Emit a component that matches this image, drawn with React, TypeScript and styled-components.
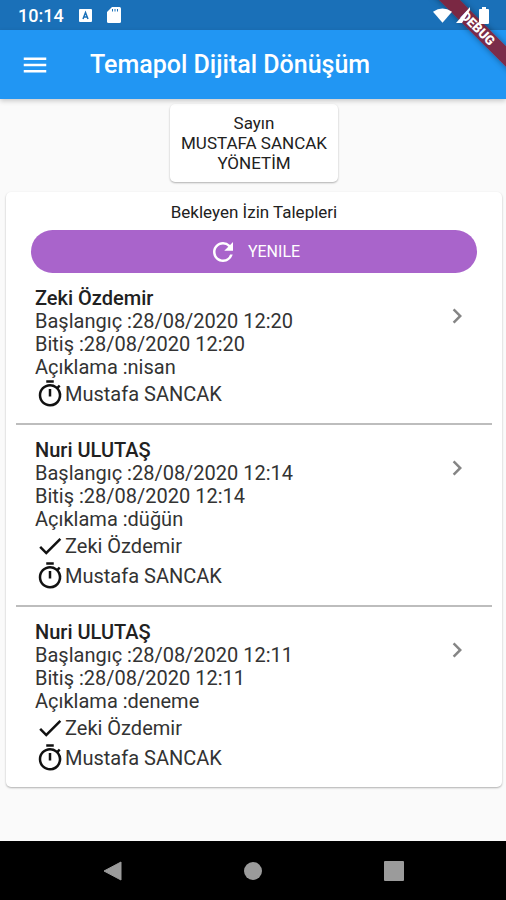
import React from "react";
import styled, { createGlobalStyle } from "styled-components";
import { MdCheck, MdChevronRight, MdMenu, MdOutlineTimer, MdRefresh } from "react-icons/md";

const GlobalStyle = createGlobalStyle`
  * { box-sizing: border-box; }
  body { margin: 0; background: #fafafa; }
  button { font: inherit; border: 0; padding: 0; background: none; cursor: pointer; }
`;

const Screen = styled.div`
  position: relative;
  display: flex;
  flex-direction: column;
  min-height: 100vh;
  overflow: hidden;
  font-family: Roboto, sans-serif;
  color: #212121;
`;

const StatusBar = styled.div`
  display: flex;
  align-items: center;
  justify-content: space-between;
  height: 30px;
  padding: 0 17px 0 18px;
  background: #1a70b8;
  color: #ffffff;
  font-size: 18px;
  font-weight: 500;
`;

const StatusGroup = styled.div<{ $gap: number }>`
  z-index: 3;
  position: relative;
  display: flex;
  align-items: center;
  gap: ${({ $gap }) => $gap}px;
`;

const AppBar = styled.header`
  z-index: 1;
  display: flex;
  align-items: center;
  gap: 40px;
  height: 69px;
  padding: 0 20px;
  background: #2196f3;
  color: #ffffff;
  box-shadow: 0 2px 5px rgba(0, 0, 0, 0.2);
`;

const MenuButton = styled.button`
  display: flex;
  color: inherit;
`;

const Title = styled.h1`
  margin: 0;
  font-size: 25px;
  font-weight: 500;
  line-height: 32px;
`;

const Content = styled.main`
  flex: 1;
  display: flex;
  flex-direction: column;
  align-items: center;
  gap: 10px;
  padding: 5px 4px 40px 6px;
`;

const Card = styled.section`
  background: #ffffff;
  border-radius: 5px;
  box-shadow: 0 1px 2px rgba(0, 0, 0, 0.3);
`;

const UserCard = styled(Card)`
  padding: 9px 11px;
  text-align: center;
  font-size: 17px;
  line-height: 20px;
`;

const RequestsCard = styled(Card)`
  align-self: stretch;
  padding: 10px 10px 0;
`;

const CardTitle = styled.h2`
  margin: 0 0 8px;
  text-align: center;
  font-size: 17px;
  font-weight: 400;
  line-height: 20px;
`;

const ActionRow = styled.div`
  display: flex;
  padding: 0 15px;
`;

const RefreshButton = styled.button`
  flex: 1;
  display: flex;
  align-items: center;
  justify-content: center;
  gap: 10px;
  height: 43px;
  border-radius: 22px;
  background: #a964cb;
  color: #ffffff;
  font-size: 16px;
`;

const RequestList = styled.ul`
  margin: 0;
  padding: 0;
  list-style: none;
`;

const Request = styled.li`
  display: flex;
  align-items: flex-start;
  justify-content: space-between;
  padding: 13px 20px 14px 19px;

  & + & {
    border-top: 2px solid #bdbdbd;
  }
`;

const Name = styled.h3`
  margin: 0;
  font-size: 20px;
  font-weight: 500;
  line-height: 24px;
`;

const Detail = styled.p`
  margin: 0;
  font-size: 20px;
  line-height: 23px;
  color: #333333;
`;

const Approval = styled.div`
  display: flex;
  align-items: center;
  height: 30px;
  font-size: 20px;
  color: #333333;

  svg { color: #111111; }
`;

const OpenButton = styled.button`
  display: flex;
  margin-top: 15px;
  color: #858585;
`;

const NavBar = styled.nav`
  display: grid;
  grid-template-columns: repeat(3, 1fr);
  height: 59px;
  padding: 0 42px;
  background: #000000;
`;

const NavButton = styled.button`
  display: flex;
  align-items: center;
  justify-content: center;
`;

const DebugBanner = styled.div`
  position: absolute;
  z-index: 2;
  top: 21px;
  right: -44px;
  width: 144px;
  height: 15px;
  transform: rotate(45deg);
  background: rgba(135, 30, 50, 0.88);
  box-shadow: 0 0 6px rgba(0, 0, 0, 0.4);
  color: #ffffff;
  text-align: center;
  font-size: 13px;
  font-weight: 900;
  line-height: 15px;
`;

type Step = { name: string; done: boolean };
type LeaveRequest = { name: string; start: string; end: string; note: string; steps: Step[] };

const requests: LeaveRequest[] = [
  {
    name: "Zeki Özdemir",
    start: "28/08/2020 12:20",
    end: "28/08/2020 12:20",
    note: "nisan",
    steps: [{ name: "Mustafa SANCAK", done: false }],
  },
  {
    name: "Nuri ULUTAŞ",
    start: "28/08/2020 12:14",
    end: "28/08/2020 12:14",
    note: "düğün",
    steps: [
      { name: "Zeki Özdemir", done: true },
      { name: "Mustafa SANCAK", done: false },
    ],
  },
  {
    name: "Nuri ULUTAŞ",
    start: "28/08/2020 12:11",
    end: "28/08/2020 12:11",
    note: "deneme",
    steps: [
      { name: "Zeki Özdemir", done: true },
      { name: "Mustafa SANCAK", done: false },
    ],
  },
];

export default function App() {
  return (
    <>
      <GlobalStyle />
      <Screen lang="tr">
        <StatusBar>
          <StatusGroup $gap={15}>
            <span>10:14</span>
            <svg width="13" height="13" viewBox="0 0 13 13">
              <rect width="13" height="13" rx="1" fill="#fff" />
              <path d="M4 10 6.5 3.5 9 10M5 8h3" fill="none" stroke="#1a70b8" strokeWidth="1.5" />
            </svg>
            <svg width="14" height="16" viewBox="0 0 14 16">
              <path d="M5 0h7.5Q14 0 14 1.5V14.5Q14 16 12.5 16h-11Q0 16 0 14.5V5z" fill="#fff" />
              <path d="M5.5 2v2.5M8 2v2.5M10.5 2v2.5" stroke="#1a70b8" strokeWidth="1" />
            </svg>
          </StatusGroup>
          <StatusGroup $gap={4}>
            <svg width="19" height="15" viewBox="0 0 20 15">
              <path d="M10 15 0 3.5Q10-3.5 20 3.5z" fill="#fff" />
            </svg>
            <svg width="19" height="16" viewBox="0 0 19 16">
              <path d="M14 0v3L6 16H0z" fill="#fff" />
            </svg>
            <svg width="10" height="17" viewBox="0 0 10 17">
              <path d="M3 0h4v2h2q1 0 1 1v13q0 1-1 1H1q-1 0-1-1V3q0-1 1-1h2z" fill="#fff" />
            </svg>
          </StatusGroup>
        </StatusBar>
        <AppBar>
          <MenuButton aria-label="Menü">
            <MdMenu size={30} />
          </MenuButton>
          <Title>Temapol Dijital Dönüşüm</Title>
        </AppBar>
        <Content>
          <UserCard>
            <div>Sayın</div>
            <div>MUSTAFA SANCAK</div>
            <div>YÖNETİM</div>
          </UserCard>
          <RequestsCard>
            <CardTitle>Bekleyen İzin Talepleri</CardTitle>
            <ActionRow>
              <RefreshButton>
                <MdRefresh size={30} />
                YENILE
              </RefreshButton>
            </ActionRow>
            <RequestList>
              {requests.map((request) => (
                <Request key={request.start}>
                  <div>
                    <Name>{request.name}</Name>
                    <Detail>Başlangıç :{request.start}</Detail>
                    <Detail>Bitiş :{request.end}</Detail>
                    <Detail>Açıklama :{request.note}</Detail>
                    {request.steps.map((step) => (
                      <Approval key={step.name}>
                        {step.done ? <MdCheck size={30} /> : <MdOutlineTimer size={30} />}
                        {step.name}
                      </Approval>
                    ))}
                  </div>
                  <OpenButton aria-label={`${request.name} ayrıntıları`}>
                    <MdChevronRight size={30} />
                  </OpenButton>
                </Request>
              ))}
            </RequestList>
          </RequestsCard>
        </Content>
        <NavBar>
          <NavButton aria-label="Geri">
            <svg width="19" height="20" viewBox="0 0 19 20">
              <path d="M18 1v18L1 10z" fill="#9b9b9b" stroke="#9b9b9b" strokeLinejoin="round" />
            </svg>
          </NavButton>
          <NavButton aria-label="Ana ekran">
            <svg width="18" height="18" viewBox="0 0 18 18">
              <circle cx="9" cy="9" r="9" fill="#9b9b9b" />
            </svg>
          </NavButton>
          <NavButton aria-label="Son uygulamalar">
            <svg width="20" height="20" viewBox="0 0 20 20">
              <rect width="20" height="20" rx="1" fill="#9b9b9b" />
            </svg>
          </NavButton>
        </NavBar>
        <DebugBanner>DEBUG</DebugBanner>
      </Screen>
    </>
  );
}
